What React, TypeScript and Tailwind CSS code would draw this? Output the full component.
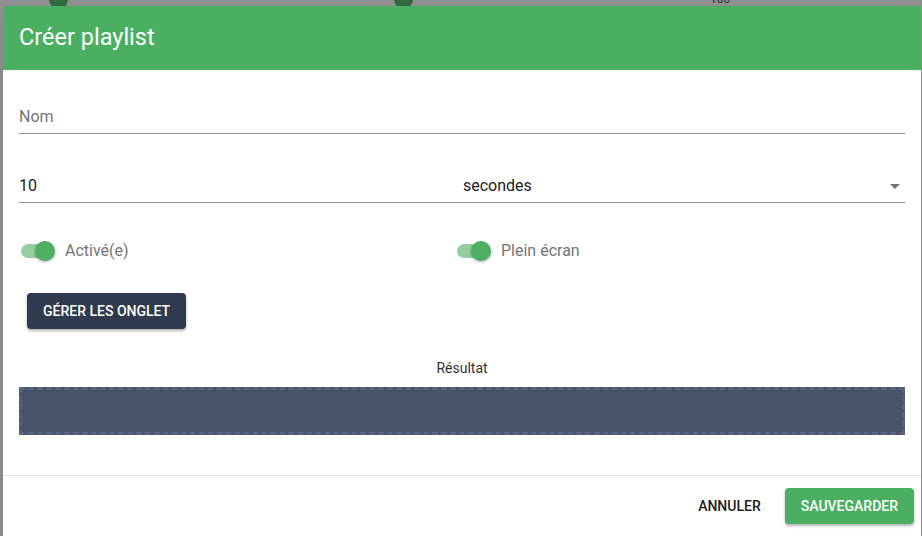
function Toggle({ label }: { label: string }) {
  return (
    <div className="flex items-center gap-[10px]">
      <div className="relative w-[34px] h-5 flex items-center ml-[2px]">
        <div className="w-[32px] h-[14px] rounded-full bg-[#4caf63]/60" />
        <div className="absolute right-0 top-0 w-5 h-5 rounded-full bg-[#4caf63] shadow-[0_1px_3px_rgba(0,0,0,0.35)]" />
      </div>
      <span className="text-base text-[#757575]">{label}</span>
    </div>
  )
}

export default function App() {
  return (
    <div
      className="relative w-[922px] h-[536px] overflow-hidden bg-[#8f8f8f]"
      style={{ fontFamily: 'Roboto, "Liberation Sans", sans-serif' }}
    >
      {/* page behind the overlay */}
      <div className="absolute left-[49px] -top-[10px] w-[19px] h-[19px] rounded-full bg-[#2f6b3d]" />
      <div className="absolute left-[394px] -top-[10px] w-[19px] h-[19px] rounded-full bg-[#2f6b3d]" />
      <div className="absolute left-[710px] -top-[9px] text-xs text-[#333]">100</div>

      <div className="absolute left-[3px] top-[6px] w-[918px] h-[540px] bg-white shadow-lg flex flex-col">
        <div className="h-16 shrink-0 bg-[#4aaf61] flex items-center px-4">
          <h1 className="text-[23.5px] text-white">Créer playlist</h1>
        </div>

        <div className="px-4 pt-[35px] flex flex-col">
          <div className="border-b border-[#949494] pb-1 text-base leading-6 text-[#757575]">Nom</div>

          <div className="flex mt-[40px]">
            <div className="w-[444px] border-b border-[#949494] pb-1 text-base leading-6 text-[#212121]">10</div>
            <div className="flex-1 border-b border-[#949494] pb-1 flex items-center justify-between text-base leading-6 text-[#212121]">
              <span>secondes</span>
              <svg width="10" height="5" viewBox="0 0 10 5" className="mr-[5px]">
                <path d="M0 0h10L5 5z" fill="#757575" />
              </svg>
            </div>
          </div>

          <div className="flex mt-[36px]">
            <div className="w-[436px]">
              <Toggle label="Activé(e)" />
            </div>
            <Toggle label="Plein écran" />
          </div>

          <div className="mt-[30px] ml-2">
            <button className="h-9 px-4 rounded bg-[#2f3a4f] text-white text-sm font-medium uppercase shadow-[0_2px_3px_rgba(0,0,0,0.3)]">
              Gérer les onglet
            </button>
          </div>

          <div className="mt-[29px] text-center text-sm text-[#333]">Résultat</div>

          <div className="mt-[9px] h-12 bg-[#48536a] border-[3px] border-dashed border-[#57637e]" />
        </div>

        <div className="mt-auto border-t border-[#e0e0e0] h-[71px] flex items-start justify-end gap-4 pr-[7px] pt-3">
          <button className="h-9 px-2 text-sm font-medium text-[#212121] uppercase">Annuler</button>
          <button className="h-9 px-4 rounded bg-[#4aaf61] text-white text-sm font-medium uppercase shadow-[0_2px_3px_rgba(0,0,0,0.3)]">
            Sauvegarder
          </button>
        </div>
      </div>
    </div>
  )
}
